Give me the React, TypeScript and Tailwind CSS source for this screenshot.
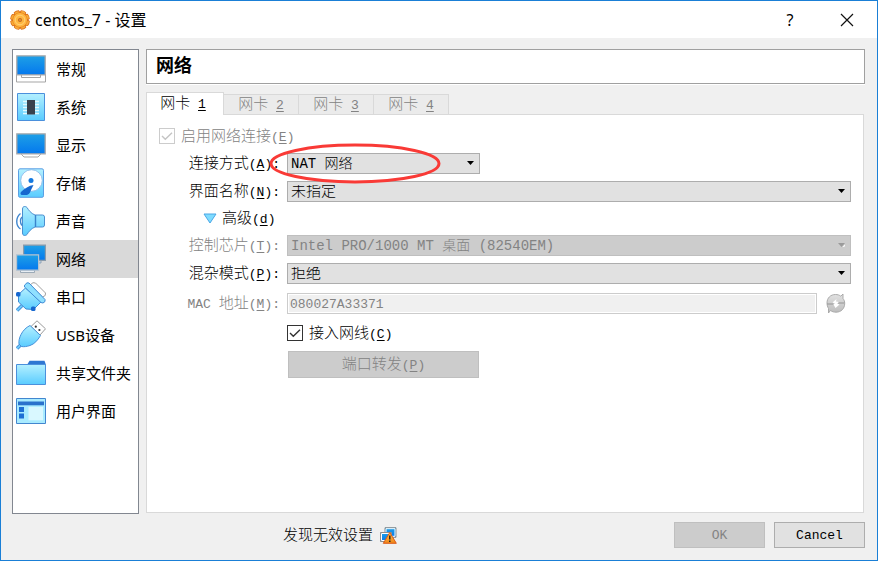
import type { ReactNode } from 'react';

const FORM_FONT = "font-['Liberation_Mono','Noto_Sans_CJK_SC',monospace]";

function Gradients() {
  return (
    <svg className="absolute size-0" aria-hidden="true">
      <defs>
        <linearGradient id="screen" x1="0" y1="0" x2="0" y2="1">
          <stop offset="0" stopColor="#1ea0e6" />
          <stop offset="1" stopColor="#0478ee" />
        </linearGradient>
        <linearGradient id="sky" x1="0" y1="0" x2="0" y2="1">
          <stop offset="0" stopColor="#b4f0ff" />
          <stop offset="1" stopColor="#5accff" />
        </linearGradient>
        <linearGradient id="flame" x1="0" y1="0" x2="0" y2="1">
          <stop offset="0" stopColor="#ffc64a" />
          <stop offset="1" stopColor="#f08418" />
        </linearGradient>
        <linearGradient id="silver" x1="0" y1="0" x2="0" y2="1">
          <stop offset="0" stopColor="#e2e2e2" />
          <stop offset="1" stopColor="#bcbcbc" />
        </linearGradient>
      </defs>
    </svg>
  );
}

function Icon({ children }: { children: ReactNode }) {
  return (
    <svg className="size-[30px] shrink-0" viewBox="0 0 30 30" fill="none" aria-hidden="true">
      {children}
    </svg>
  );
}

const GeneralIcon = () => (
  <Icon>
    <path d="M.5 20.5h29v7.500H.5z" fill="#fff" stroke="#a5a5a5" />
    <path d="M5.500 21v2.500h19V21" fill="#fff" stroke="#a5a5a5" />
    <path d="M.8 1.800h28.400v19H.8z" fill="url(#screen)" stroke="#a9a9ab" strokeWidth="1.300" />
  </Icon>
);

const SystemIcon = () => (
  <Icon>
    <path d="M1.500 1.500h27v27h-27z" fill="url(#sky)" stroke="#4b90dc" />
    <path d="M7 9.500h16M7 12.500h16M7 15.500h16M7 18.500h16M7 21.500h16" stroke="#e4fbff" strokeWidth="1.300" />
    <path d="M11 8h8v14.500h-8z" fill="#39424f" />
  </Icon>
);

const DisplayIcon = () => (
  <Icon>
    <path d="M5.500 23v1.500L8 27h14l2.500-2.500V23z" fill="#fff" stroke="#a5a5a5" />
    <path d="M.8 3.800h28.400v20H.8z" fill="url(#screen)" stroke="#a9a9ab" strokeWidth="1.300" />
  </Icon>
);

const StorageIcon = () => (
  <Icon>
    <rect x="2.500" y=".8" width="25" height="28.500" rx="1.500" fill="url(#sky)" stroke="#5a9fe4" />
    <circle cx="15.500" cy="12.500" r="10.800" fill="#fff" stroke="#7fb3e8" strokeWidth=".8" />
    <circle cx="15" cy="12.500" r="2.500" fill="#1479e0" />
    <path d="M17.500 17c-4.500.5-9 3.500-12.500 7-1 1.500-.5 3 1 3h5c3-1 3.500-4 4.500-6z" fill="#1667cf" />
  </Icon>
);

const SoundIcon = () => (
  <Icon>
    <path d="M6 11c-2 2-2 6.500 0 8.500M4.500 7.500c-5 4-5 12 0 15.500" stroke="#3f86cf" strokeWidth="1.400" />
    <path
      d="M6.500 3c0-3 3-3 4.500-1.500 1.500 2.500 4 6 8 7.500h7.500q2 0 2 2v8q0 2-2 2H19c-4 1.500-6.500 5-8 7.500-1.500 1.500-4.500 1.500-4.500-1.500z"
      fill="url(#sky)"
      stroke="#4b8fd0"
    />
    <path d="M19.500 9v12" stroke="#3a84cc" strokeWidth="1.400" />
  </Icon>
);

const NetworkIcon = () => (
  <Icon>
    <path d="M12 15h13v4H12z" fill="#c9d6e2" stroke="#7d97b0" strokeWidth=".8" />
    <path d="M7.600 1.100h21.800v15.300H7.600z" fill="url(#screen)" stroke="#8a9bab" strokeWidth="1.200" />
    <path d="M4.500 26v2.500h14V26z" fill="#e8eef4" stroke="#8a9bab" strokeWidth=".8" />
    <path d="M.6 10.900h22v15.300H.6z" fill="url(#screen)" stroke="#b6c3cf" strokeWidth="1.200" />
  </Icon>
);

const SerialIcon = () => (
  <Icon>
    <path d="M14 3l3-2.300 2.500.3 10 10-.3 2.500L26.500 15z" fill="#fff" stroke="#a0a0a0" />
    <path d="M1 28.500l5-5" stroke="#4a92d8" strokeWidth="3.600" />
    <path d="M1 28.500l5-5" stroke="#6ecfff" strokeWidth="1.600" />
    <path d="M9.500 6L2.500 12.500v7.500l7.500 7 7.500.5L25 20z" fill="url(#sky)" stroke="#3f8bd6" />
    <path d="M8.500 3.200L11 .8l2 .2 16 16.500v2l-2 1.500-2-.5L8.500 5z" fill="#8fe0ff" stroke="#3f8bd6" />
    <rect x="0" y="10" width="4.500" height="4.500" rx="1.500" fill="#1667cf" />
    <rect x="15" y="24.500" width="4.500" height="4.500" rx="1.500" fill="#1667cf" />
  </Icon>
);

const UsbIcon = () => (
  <Icon>
    <path d="M1 28.500l5-5" stroke="#4a92d8" strokeWidth="3.600" />
    <path d="M1 28.500l5-5" stroke="#6ecfff" strokeWidth="1.600" />
    <path d="M15 6.500L21 .8l8.500 8L24 15z" fill="#fff" stroke="#9b9b9b" />
    <circle cx="19.800" cy="6.700" r="1.100" fill="#333" />
    <circle cx="23.400" cy="10" r="1.100" fill="#333" />
    <path d="M14 5.500l10.500 10c-3 5-6 8.500-10.500 10-3 1-6 1.500-8.500 1L3 24c-.5-3 .5-6.500 2-9.500C7 10.500 10 7.500 14 5.500z" fill="url(#sky)" stroke="#4691da" />
  </Icon>
);

const FolderIcon = () => (
  <Icon>
    <path d="M11 7l2.500-4.300h15L30 7z" fill="#2e77d2" />
    <path d="M.5 6.500h29v20H.5z" fill="url(#sky)" stroke="#4b90dc" />
  </Icon>
);

const InterfaceIcon = () => (
  <Icon>
    <path d="M.5 2.500h29v25H.5z" fill="#a9ebff" stroke="#4286cf" />
    <path d="M2 5.500h26v3.800H2z" fill="#2a72cc" />
    <path d="M12.500 10.800h14.500v13.500H12.500z" fill="#d9f8ff" />
    <path d="M3 11h5v5H3zM3 17.500h5v5H3z" fill="#1e6fd4" />
  </Icon>
);

function GearIcon() {
  return (
    <svg className="size-5 shrink-0" viewBox="0 0 20 20" aria-hidden="true">
      <g fill="url(#flame)" stroke="#dd731d" strokeWidth=".9">
        {[0, 45, 90, 135, 180, 225, 270, 315].map((deg) => (
          <path key={deg} d="M6.800 4L7.600.900q2.400-.9 4.800 0l.8 3.100z" transform={`rotate(${deg + 22} 10 10)`} />
        ))}
        <circle cx="10" cy="10" r="7" />
      </g>
      <circle cx="10" cy="10" r="7" fill="#ffb63f" />
      <circle cx="10" cy="10" r="4.800" fill="none" stroke="#ffd27a" strokeWidth="1" />
      <circle cx="10" cy="10" r="1.700" fill="#e9861e" stroke="#b86a2a" strokeWidth=".8" />
    </svg>
  );
}

function RefreshIcon() {
  return (
    <svg className="h-[21px] w-5" viewBox="0 0 20 21" aria-hidden="true">
      <path
        d="M1 10C1 5 4.500 1.500 9.500 1.500c2 0 3.800.5 5.300 1.700L17 1v4.500c1.200 1.500 1.700 3 1.700 5 0 5-3.500 8.700-8.700 8.700-2 0-4-.5-5.500-1.700L2.500 20v-4.500C1.500 14 1 12 1 10z"
        fill="url(#silver)"
        stroke="#a4a4a4"
        strokeWidth=".9"
      />
      <path d="M1 11h6.500M12 10h6.500" stroke="#959595" strokeWidth="1.200" />
      <path d="M10.500 6L6.500 9.500l2.500 1-1.500 1 2 3.500 4-3.500-2.500-1 2-1.500-3-.5z" fill="#fff" />
    </svg>
  );
}

function WarningIcon() {
  return (
    <svg className="size-[17px]" viewBox="0 0 17 17" aria-hidden="true">
      <path d="M5 .7h11v9.600H5z" fill="url(#screen)" stroke="#8e8e8e" />
      <path d="M6 1.700h9v7.600H6z" fill="none" stroke="#fff" />
      <path d="M.5 5.500h11v9H.5z" fill="url(#screen)" stroke="#8e8e8e" />
      <path d="M1.500 6.500h9v7h-9z" fill="none" stroke="#fff" />
      <path d="M9.800 5.500l6.500 10.800H3.300z" fill="url(#flame)" stroke="#dd5a17" strokeLinejoin="round" />
      <path d="M9.800 8.500v4M9.800 13.500V15" stroke="#222" strokeWidth="1.500" />
    </svg>
  );
}

const categories = [
  { name: '常规', icon: <GeneralIcon /> },
  { name: '系统', icon: <SystemIcon /> },
  { name: '显示', icon: <DisplayIcon /> },
  { name: '存储', icon: <StorageIcon /> },
  { name: '声音', icon: <SoundIcon /> },
  { name: '网络', icon: <NetworkIcon />, selected: true },
  { name: '串口', icon: <SerialIcon /> },
  { name: 'USB设备', icon: <UsbIcon /> },
  { name: '共享文件夹', icon: <FolderIcon /> },
  { name: '用户界面', icon: <InterfaceIcon /> },
];

function Latin({ children }: { children: ReactNode }) {
  return <span className="text-[13px] whitespace-pre">{children}</span>;
}

// Caption followed by its keyboard shortcut in brackets.
function Caption({ text, hotkey, colon }: { text: ReactNode; hotkey: string; colon?: boolean }) {
  return (
    <>
      {text}
      <Latin>
        (<u className="underline-offset-2">{hotkey}</u>){colon && ':'}
      </Latin>
    </>
  );
}

function FieldLabel({ id, text, hotkey, disabled }: { id: string; text: ReactNode; hotkey: string; disabled?: boolean }) {
  return (
    <label htmlFor={id} className={`pt-px text-right whitespace-nowrap ${disabled ? 'text-[#838383]' : ''}`}>
      <Caption text={text} hotkey={hotkey} colon />
    </label>
  );
}

function Dropdown({ id, value, disabled, cjk }: { id: string; value: string; disabled?: boolean; cjk?: boolean }) {
  return (
    <div className="relative h-[21px]">
      <select
        id={id}
        disabled={disabled}
        className={`block h-full w-full appearance-none border pt-px pr-5 pl-[3px] leading-none font-light ${cjk ? 'text-[15px]' : 'text-sm'} ${
          disabled ? 'border-[#bfbfbf] bg-[#ccc] text-[#838383] opacity-100' : 'border-[#adadad] bg-[#e1e1e1]'
        }`}
      >
        <option>{value}</option>
      </select>
      <svg className="pointer-events-none absolute top-2 right-[6px] h-1 w-[7px]" viewBox="0 0 7 4" aria-hidden="true">
        {disabled && <path d="M4 4.500L7.500 1v2L5.500 4z" fill="#fff" />}
        <path d="M0 0h7L3.500 4z" fill={disabled ? '#9a9a9a' : '#000'} />
      </svg>
    </div>
  );
}

function CheckBox({ id, disabled, children }: { id: string; disabled?: boolean; children: ReactNode }) {
  return (
    <div className={`flex h-[17px] items-center ${disabled ? 'text-[#838383]' : ''}`}>
      <span className="relative size-4">
        <input
          id={id}
          type="checkbox"
          defaultChecked
          disabled={disabled}
          className={`block size-4 appearance-none border bg-white ${disabled ? 'border-[#ccc]' : 'border-[#333]'}`}
        />
        <svg className="pointer-events-none absolute inset-0 size-4" viewBox="0 0 16 16" fill="none" aria-hidden="true">
          <path d="M3 8l3.300 3.300L13 4.700" stroke={disabled ? '#c4c4c4' : '#333'} strokeWidth="1.400" />
        </svg>
      </span>
      <label htmlFor={id} className="pt-[3px] pl-[6px] whitespace-nowrap">{children}</label>
    </div>
  );
}

function Tabs() {
  return (
    <div role="tablist" className="flex h-[22px] items-end">
      <button
        role="tab"
        aria-selected="true"
        className="relative z-10 -mb-px h-[23px] w-[78px] border border-b-0 border-[#d9d9d9] bg-white pr-1"
      >
        网卡<Latin> <u className="underline-offset-2">1</u></Latin>
      </button>
      {['2', '3', '4'].map((n) => (
        <button
          key={n}
          role="tab"
          aria-selected="false"
          className="h-5 w-[75px] border border-b-0 border-l-0 border-[#d9d9d9] bg-[#ebebeb] pt-px leading-none text-[#838383]"
        >
          网卡<Latin> <u className="underline-offset-2">{n}</u></Latin>
        </button>
      ))}
    </div>
  );
}

export default function App() {
  return (
    <div className={`flex min-h-screen flex-col border border-[#1a7fd6] bg-[#f0f0f0] text-[15px] leading-none font-light text-black ${FORM_FONT}`}>
      <Gradients />
      <header className="flex h-[37px] shrink-0 items-center bg-white pr-[23px] pl-[9px] font-['Noto_Sans','Noto_Sans_CJK_SC',sans-serif] font-normal">
        <GearIcon />
        <h1 className="grow pl-[5px] text-base leading-none">centos_7 - 设置</h1>
        <button aria-label="Help" className="mr-[42px] w-4 text-base">?</button>
        <button aria-label="Close">
          <svg className="size-[14px]" viewBox="0 0 14 14" aria-hidden="true">
            <path d="M1 1l12 12M13 1L1 13" stroke="#111" strokeWidth="1.200" />
          </svg>
        </button>
      </header>

      <main className="flex grow gap-[7px] pt-[11px] pr-3 pl-[11px]">
        <nav className="w-[127px] shrink-0 border border-[#828790] bg-white font-['Noto_Sans','Noto_Sans_CJK_SC',sans-serif] font-normal">
          {categories.map((c) => (
            <button
              key={c.name}
              className={`flex h-[38px] w-full items-center gap-[10px] pl-[3px] whitespace-nowrap ${c.selected ? 'bg-[#d9d9d9]' : ''}`}
            >
              {c.icon}
              {c.name}
            </button>
          ))}
        </nav>

        <section className="flex min-w-0 grow flex-col">
          <h2 className="flex h-[35px] items-center border border-[#a0a0a0] bg-white pt-px pl-[9px] text-lg leading-none font-bold shadow-[0_1px_0_#fff]">
            网络
          </h2>
          <div className="mt-2">
            <Tabs />
          </div>
          <div role="tabpanel" className="mr-px mb-px grow border border-[#d9d9d9] bg-white p-3">
            <CheckBox id="enable" disabled>
              <Caption text="启用网络连接" hotkey="E" />
            </CheckBox>

            <div className="mt-[9px] grid grid-cols-[121px_1fr] items-center gap-[7px]">
              <FieldLabel id="attached" text="连接方式" hotkey="A" />
              <div className="relative z-10 w-[193px]">
                <Dropdown id="attached" value="NAT 网络" />
                <svg className="pointer-events-none absolute -top-[10px] -left-[18px] h-[41px] w-[172px]" viewBox="0 0 172 41" fill="none" aria-hidden="true">
                  <ellipse cx="86" cy="20.500" rx="84" ry="18.500" stroke="#f93a36" strokeWidth="3" />
                </svg>
              </div>
              <FieldLabel id="name" text="界面名称" hotkey="N" />
              <Dropdown id="name" value="未指定" cjk />
              <button className="col-span-2 ml-11 flex h-[19px] items-center gap-[5px] justify-self-start">
                <svg className="h-[11px] w-[14px]" viewBox="0 0 14 11" aria-hidden="true">
                  <path d="M1 1h12L7 10z" fill="#7fdcff" stroke="#4ba6e6" strokeLinejoin="round" />
                </svg>
                <span className="pt-px"><Caption text="高级" hotkey="d" /></span>
              </button>
              <FieldLabel id="chip" text="控制芯片" hotkey="T" disabled />
              <Dropdown id="chip" value="Intel PRO/1000 MT 桌面 (82540EM)" disabled />
              <FieldLabel id="promiscuous" text="混杂模式" hotkey="P" />
              <Dropdown id="promiscuous" value="拒绝" cjk />
            </div>

            <div className="mt-[9px] grid grid-cols-[121px_1fr] items-center gap-x-[7px] gap-y-[10px]">
              <FieldLabel id="mac" text={<><Latin>MAC </Latin>地址</>} hotkey="M" disabled />
              <div className="flex items-center gap-[9px] pr-[5px]">
                <input
                  id="mac"
                  disabled
                  defaultValue="080027A33371"
                  className="h-[21px] min-w-0 grow border border-[#ccc] bg-[#f0f0f0] px-[2px] pt-px text-[13px] text-[#838383] shadow-[inset_0_0_0_1px_#fff]"
                />
                <button disabled aria-label="Refresh MAC">
                  <RefreshIcon />
                </button>
              </div>
              <div className="col-start-2">
                <CheckBox id="cable">
                  <Caption text="接入网线" hotkey="C" />
                </CheckBox>
              </div>
              <button disabled className="col-start-2 ml-px h-[27px] w-[191px] border border-[#bfbfbf] bg-[#ccc] pt-px text-[#838383]">
                <Caption text="端口转发" hotkey="P" />
              </button>
            </div>
          </div>
        </section>
      </main>

      <footer className="flex shrink-0 items-center gap-[9px] pt-2 pr-3 pb-3">
        <p className="flex grow items-center gap-[7px] pl-[282px]">
          <span className="pt-[2px]">发现无效设置</span>
          <WarningIcon />
        </p>
        <button disabled className="h-[26px] w-[91px] border border-[#bfbfbf] bg-[#ccc] text-[13px] text-[#838383]">OK</button>
        <button className="h-[26px] w-[91px] border border-[#adadad] bg-[#e1e1e1] text-[13px]">Cancel</button>
      </footer>
    </div>
  );
}
